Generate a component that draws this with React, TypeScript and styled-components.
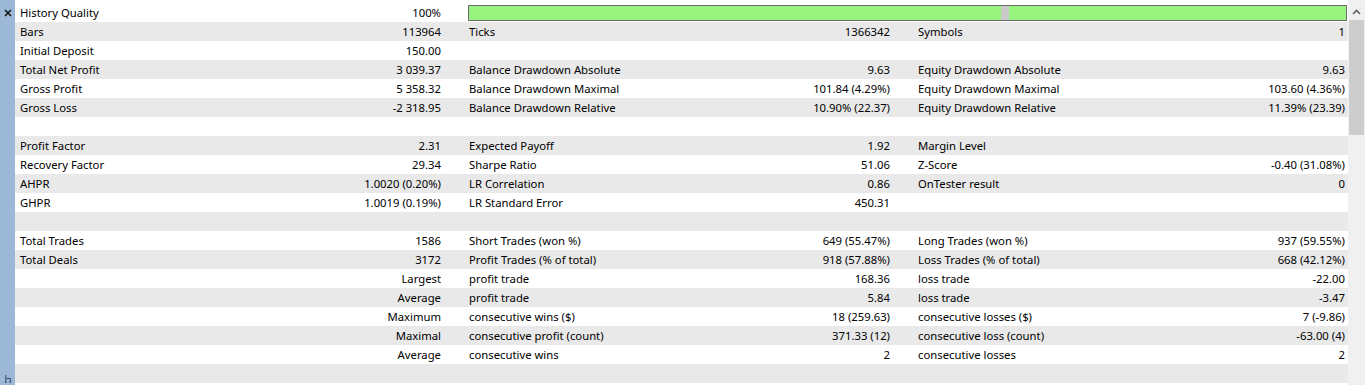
import React from 'react';
import styled, { createGlobalStyle } from 'styled-components';

const GlobalStyle = createGlobalStyle`
  html, body {
    margin: 0;
    padding: 0;
    background: #ffffff;
  }
  body {
    font-family: "Noto Sans", "Liberation Sans", sans-serif;
    font-size: 11.3px;
    color: #000;
  }
`;

type Cell = { label?: string; value?: string };
type Row = { cells: Cell[]; bar?: boolean };

const rows: Row[] = [
  { cells: [{ label: 'History Quality', value: '100%' }], bar: true },
  { cells: [{ label: 'Bars', value: '113964' }, { label: 'Ticks', value: '1366342' }, { label: 'Symbols', value: '1' }] },
  { cells: [{ label: 'Initial Deposit', value: '150.00' }, {}, {}] },
  { cells: [{ label: 'Total Net Profit', value: '3 039.37' }, { label: 'Balance Drawdown Absolute', value: '9.63' }, { label: 'Equity Drawdown Absolute', value: '9.63' }] },
  { cells: [{ label: 'Gross Profit', value: '5 358.32' }, { label: 'Balance Drawdown Maximal', value: '101.84 (4.29%)' }, { label: 'Equity Drawdown Maximal', value: '103.60 (4.36%)' }] },
  { cells: [{ label: 'Gross Loss', value: '-2 318.95' }, { label: 'Balance Drawdown Relative', value: '10.90% (22.37)' }, { label: 'Equity Drawdown Relative', value: '11.39% (23.39)' }] },
  { cells: [{}, {}, {}] },
  { cells: [{ label: 'Profit Factor', value: '2.31' }, { label: 'Expected Payoff', value: '1.92' }, { label: 'Margin Level', value: '' }] },
  { cells: [{ label: 'Recovery Factor', value: '29.34' }, { label: 'Sharpe Ratio', value: '51.06' }, { label: 'Z-Score', value: '-0.40 (31.08%)' }] },
  { cells: [{ label: 'AHPR', value: '1.0020 (0.20%)' }, { label: 'LR Correlation', value: '0.86' }, { label: 'OnTester result', value: '0' }] },
  { cells: [{ label: 'GHPR', value: '1.0019 (0.19%)' }, { label: 'LR Standard Error', value: '450.31' }, {}] },
  { cells: [{}, {}, {}] },
  { cells: [{ label: 'Total Trades', value: '1586' }, { label: 'Short Trades (won %)', value: '649 (55.47%)' }, { label: 'Long Trades (won %)', value: '937 (59.55%)' }] },
  { cells: [{ label: 'Total Deals', value: '3172' }, { label: 'Profit Trades (% of total)', value: '918 (57.88%)' }, { label: 'Loss Trades (% of total)', value: '668 (42.12%)' }] },
  { cells: [{ value: 'Largest' }, { label: 'profit trade', value: '168.36' }, { label: 'loss trade', value: '-22.00' }] },
  { cells: [{ value: 'Average' }, { label: 'profit trade', value: '5.84' }, { label: 'loss trade', value: '-3.47' }] },
  { cells: [{ value: 'Maximum' }, { label: 'consecutive wins ($)', value: '18 (259.63)' }, { label: 'consecutive losses ($)', value: '7 (-9.86)' }] },
  { cells: [{ value: 'Maximal' }, { label: 'consecutive profit (count)', value: '371.33 (12)' }, { label: 'consecutive loss (count)', value: '-63.00 (4)' }] },
  { cells: [{ value: 'Average' }, { label: 'consecutive wins', value: '2' }, { label: 'consecutive losses', value: '2' }] },
  { cells: [{}, {}, {}] },
];

export default function App() {
  return (
    <>
      <GlobalStyle />
      <Frame>
        <SideBar>
          <CloseIcon viewBox="0 0 8 8">
            <path d="M1 1l6 6M7 1l-6 6" stroke="#111" strokeWidth="1.5" fill="none" />
          </CloseIcon>
          <SideIcon viewBox="0 0 10 10">
            <path d="M2 1v8M2 5h5v4M1 9h2M6 9h2" stroke="#3a4f7a" strokeWidth="1.2" fill="none" />
          </SideIcon>
        </SideBar>
        <Report>
          {rows.map((row, i) => (
            <Line key={i} $odd={i % 2 === 1}>
              {row.cells.map((c, j) => (
                <Group key={j} $col={j}>
                  <Label>{c.label}</Label>
                  <Value>{c.value}</Value>
                </Group>
              ))}
              {row.bar && (
                <BarCell>
                  <Bar>
                    <BarGap />
                  </Bar>
                </BarCell>
              )}
            </Line>
          ))}
        </Report>
        <ScrollBar>
          <Arrow>
            <svg width="9" height="6" viewBox="0 0 9 6">
              <path d="M1 5l3.5-3.5L8 5" stroke="#606060" strokeWidth="1.6" fill="none" />
            </svg>
          </Arrow>
          <Thumb />
        </ScrollBar>
      </Frame>
    </>
  );
}

const Frame = styled.div`
  display: flex;
  width: 1365px;
  height: 385px;
  overflow: hidden;
`;

const SideBar = styled.div`
  width: 15px;
  flex: none;
  background: #9bb8d6;
  display: flex;
  flex-direction: column;
  align-items: center;
  justify-content: space-between;
  padding: 9px 0 2px;
  box-sizing: border-box;
`;

const CloseIcon = styled.svg`
  width: 8px;
  height: 8px;
`;

const SideIcon = styled.svg`
  width: 9px;
  height: 9px;
  margin-left: 2px;
`;

const Report = styled.div`
  width: 1333px;
  flex: none;
  padding-top: 3px;
`;

const Line = styled.div<{ $odd: boolean }>`
  display: grid;
  grid-template-columns: 449px 449px 435px;
  height: 19px;
  line-height: 19px;
  background: ${(p) => (p.$odd ? '#e9e9e9' : '#ffffff')};
  position: relative;
`;

const Group = styled.div<{ $col: number }>`
  display: flex;
  justify-content: space-between;
  padding-left: 5px;
  padding-right: ${(p) => (p.$col === 2 ? '3px' : '23px')};
  white-space: nowrap;
  grid-column: ${(p) => p.$col + 1};
  grid-row: 1;
`;

const Label = styled.span``;

const Value = styled.span`
  text-align: right;
`;

const BarCell = styled.div`
  grid-column: 2 / 4;
  grid-row: 1;
  padding: 2px 1px 1px 4px;
`;

const Bar = styled.div`
  height: 14px;
  border: 1px solid #6a6a6a;
  background: #98f47f;
  position: relative;
`;

const BarGap = styled.div`
  position: absolute;
  left: 532px;
  top: 0;
  bottom: 0;
  width: 8px;
  background: #c9c9c9;
`;

const ScrollBar = styled.div`
  width: 17px;
  flex: none;
  background: #f0f0f0;
  padding-top: 3px;
`;

const Arrow = styled.div`
  height: 17px;
  display: flex;
  align-items: center;
  justify-content: center;
`;

const Thumb = styled.div`
  margin: 0 1px;
  height: 115px;
  background: #cdcdcd;
`;
